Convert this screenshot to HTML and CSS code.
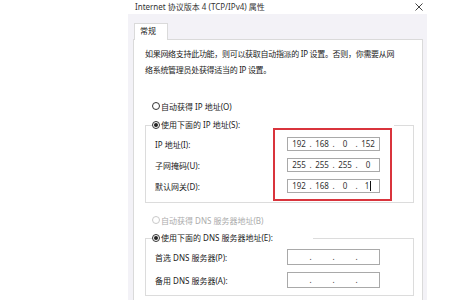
FILE: index.html
```html
<!DOCTYPE html>
<html lang="zh-CN">
<head>
<meta charset="utf-8">
<title>Internet 协议版本 4 (TCP/IPv4) 属性</title>
<link rel="stylesheet" href="styles.css">
</head>
<body>
<div class="page">
  <div class="window">
    <div class="titlebar">
      <span class="title">Internet 协议版本 4 (TCP/IPv4) 属性</span>
      <svg class="close" width="8" height="8" viewBox="0 0 8 8"><path d="M0.5 0.5 L7.5 7.5 M7.5 0.5 L0.5 7.5" stroke="#444" stroke-width="1" fill="none"/></svg>
    </div>
    <div class="client">
      <div class="tabs"><div class="tab">常规</div></div>
      <div class="panel">
        <p class="desc">如果网络支持此功能，则可以获取自动指派的 IP 设置。否则，你需要从网<br>络系统管理员处获得适当的 IP 设置。</p>

        <div class="radio-row gap-ip"><span class="radio"></span><span>自动获得 IP 地址(O)</span></div>
        <fieldset class="group ip-group">
          <legend class="legend ip-legend"><span class="radio checked"></span><span>使用下面的 IP 地址(S):</span></legend>
          <div class="row"><span class="lbl">IP 地址(I):</span>
            <div class="ipbox"><span class="seg">192</span><span class="dot">.</span><span class="seg">168</span><span class="dot">.</span><span class="seg">0</span><span class="dot">.</span><span class="seg">152</span></div>
          </div>
          <div class="row"><span class="lbl">子网掩码(U):</span>
            <div class="ipbox"><span class="seg">255</span><span class="dot">.</span><span class="seg">255</span><span class="dot">.</span><span class="seg">255</span><span class="dot">.</span><span class="seg">0</span></div>
          </div>
          <div class="row"><span class="lbl">默认网关(D):</span>
            <div class="ipbox focus"><span class="seg">192</span><span class="dot">.</span><span class="seg">168</span><span class="dot">.</span><span class="seg">0</span><span class="dot">.</span><span class="seg">1<span class="caret"></span></span></div>
          </div>
        </fieldset>

        <div class="radio-row gap-dns disabled"><span class="radio"></span><span>自动获得 DNS 服务器地址(B)</span></div>
        <fieldset class="group dns-group">
          <legend class="legend dns-legend"><span class="radio checked"></span><span>使用下面的 DNS 服务器地址(E):</span></legend>
          <div class="row tall"><span class="lbl">首选 DNS 服务器(P):</span>
            <div class="ipbox"><span class="seg"></span><span class="dot">.</span><span class="seg"></span><span class="dot">.</span><span class="seg"></span><span class="dot">.</span><span class="seg"></span></div>
          </div>
          <div class="row tall"><span class="lbl">备用 DNS 服务器(A):</span>
            <div class="ipbox"><span class="seg"></span><span class="dot">.</span><span class="seg"></span><span class="dot">.</span><span class="seg"></span><span class="dot">.</span><span class="seg"></span></div>
          </div>
        </fieldset>

        <div class="annot"></div>
      </div>
    </div>
  </div>
</div>
</body>
</html>
```

FILE: styles.css
```css
html, body {
  margin: 0;
  padding: 0;
  background: #ffffff;
}

body {
  width: 450px;
  height: 300px;
  overflow: hidden;
  font-family: "Noto Sans", "Noto Sans CJK SC", sans-serif;
  font-size: 8px;
  color: #222222;
}

.page {
  width: 450px;
  height: 300px;
  overflow: hidden;
}

.window {
  margin-left: 128px;
  width: 299px;
  height: 300px;
  display: flex;
  flex-direction: column;
}

.titlebar {
  height: 14px;
  flex: none;
  display: flex;
  align-items: center;
  justify-content: space-between;
  padding: 0 4px 0 7px;
  background: #ffffff;
  color: #333333;
  line-height: 14px;
  white-space: nowrap;
}

.close {
  display: block;
}

.client {
  flex: 1;
  background: #f3f2f7;
  padding: 9px 4px 0 5px;
}

.tabs {
  display: flex;
}

.tab {
  position: relative;
  z-index: 1;
  box-sizing: border-box;
  margin-left: 1px;
  margin-bottom: -1px;
  width: 34px;
  height: 17px;
  padding-left: 5px;
  line-height: 13px;
  background: #ffffff;
  border: 1px solid #dadada;
  border-bottom: none;
}

.panel {
  position: relative;
  height: 300px;
  background: #ffffff;
  border: 1px solid #dadada;
  padding: 6px 8px 0 11px;
}

.desc {
  margin: 0;
  line-height: 16px;
  white-space: nowrap;
  letter-spacing: -0.3px;
}

.radio-row {
  display: flex;
  align-items: center;
  gap: 1px;
  height: 14px;
  padding-left: 7px;
  white-space: nowrap;
}

.gap-ip {
  margin-top: 21px;
}

.gap-dns {
  margin-top: 10px;
}

.radio {
  box-sizing: border-box;
  width: 8px;
  height: 8px;
  border: 1px solid #333333;
  border-radius: 50%;
  background: #ffffff;
  display: flex;
  align-items: center;
  justify-content: center;
  flex: none;
}

.radio.checked::after {
  content: "";
  width: 4px;
  height: 4px;
  border-radius: 50%;
  background: #222222;
}

.disabled {
  color: #ababab;
}

.disabled .radio {
  border-color: #c9c9c9;
}

.group {
  margin: 0;
  min-width: 0;
  border: 1px solid #dcdcdc;
  padding: 5px 33px 9px 0;
}

.ip-group {
  margin-top: 5px;
}

.dns-group {
  margin-top: 4px;
  padding: 4px 33px 7px 0;
}

.legend {
  box-sizing: border-box;
  margin-left: 6px;
  padding: 0;
  height: 14px;
  line-height: 14px;
  display: flex;
  align-items: center;
  gap: 1px;
  white-space: nowrap;
}

.ip-legend {
  width: 242px;
}

.dns-legend {
  width: 161px;
}

.row {
  display: flex;
  align-items: center;
  height: 14px;
}

.row + .row {
  margin-top: 7px;
}

.row.tall {
  height: 16px;
}

.lbl {
  flex: 1;
  padding-left: 9px;
  white-space: nowrap;
}

.ipbox {
  box-sizing: border-box;
  width: 93px;
  height: 100%;
  border: 1px solid #a9a9a9;
  background: #ffffff;
  display: flex;
  align-items: center;
  padding: 0 1px;
  color: #333333;
  line-height: 12px;
}

.seg {
  width: 20px;
  text-align: center;
  white-space: nowrap;
}

.dot {
  width: 3px;
  text-align: center;
}

.caret {
  display: inline-block;
  width: 1px;
  height: 10px;
  margin-left: 1px;
  background: #111111;
  vertical-align: -2px;
}

.annot {
  position: absolute;
  left: 139px;
  top: 88px;
  box-sizing: border-box;
  width: 119px;
  height: 73px;
  border: 2px solid #d9343c;
  pointer-events: none;
}
```
